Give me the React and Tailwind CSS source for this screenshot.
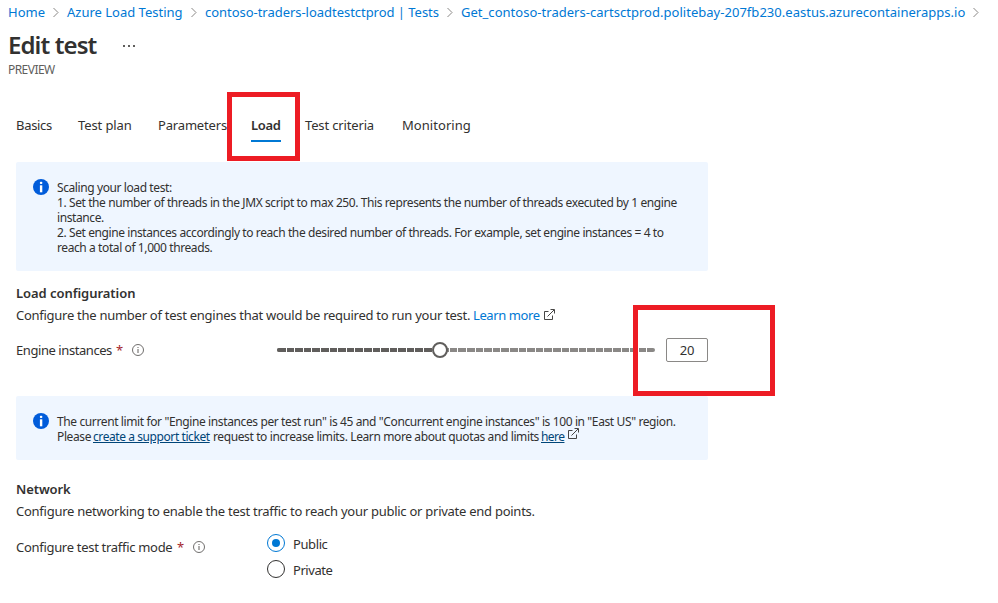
const CRUMBS = [
  { text: 'Home', cls: 'w-[37px]' },
  { text: 'Azure Load Testing', cls: 'w-[116px]' },
  { text: 'contoso-traders-loadtestctprod | Tests', cls: 'w-[234px] tracking-[-0.035px]' },
  {
    text: 'Get_contoso-traders-cartsctprod.politebay-207fb230.eastus.azurecontainerapps.io',
    cls: 'w-[504px] tracking-[0.027px]',
  },
];

const TABS = [
  { text: 'Basics', cls: 'w-[62px] tracking-[-0.3px]' },
  { text: 'Test plan', cls: 'w-[80px] tracking-[-0.1px]' },
  { text: 'Parameters', cls: 'w-[93px] tracking-[-0.17px]' },
  { text: 'Load', cls: 'w-[54px]', active: true },
  { text: 'Test criteria', cls: 'w-[97px] tracking-[-0.15px]' },
  { text: 'Monitoring', cls: 'w-[80px] tracking-[0.05px]' },
];

const STEPS = 44;
const VALUE = 19;

function Chevron() {
  return (
    <svg className="h-[13px] w-[22px] shrink-0" viewBox="0 0 22 13" fill="none" stroke="#8a8886" strokeWidth="1">
      <path d="M8.5 2 L13 6.5 L8.5 11" />
    </svg>
  );
}

function InfoBadge() {
  return (
    <svg className="size-4 shrink-0" viewBox="0 0 16 16">
      <circle cx="8" cy="8" r="8" fill="#015cda" />
      <rect x="6.9" y="2.8" width="2.4" height="2.2" rx="0.8" fill="#fff" />
      <rect x="6.9" y="6.3" width="2.4" height="7" fill="#fff" />
    </svg>
  );
}

function InfoOutline() {
  return (
    <svg className="size-3 shrink-0" viewBox="0 0 12 12">
      <circle cx="6" cy="6" r="5.5" fill="none" stroke="#605e5c" strokeWidth="0.9" />
      <rect x="5.5" y="3" width="1" height="1" fill="#605e5c" />
      <rect x="5.5" y="5" width="1" height="4" fill="#605e5c" />
    </svg>
  );
}

function ExternalIcon({ className }) {
  return (
    <svg className={className} viewBox="0 0 12 12" fill="none" stroke="#323130" strokeWidth="0.9">
      <path d="M5.5 2.5 H1.5 V10.5 H9.5 V6.5" />
      <path d="M4.5 7.5 L11 1" />
      <path d="M7.5 0.5 H11.5 V4.5" />
    </svg>
  );
}

function Slider() {
  const percent = (VALUE / STEPS) * 100;
  return (
    <div className="relative h-4 w-[378px]">
      <div className="absolute inset-x-0 top-1.5 h-1 overflow-hidden rounded-sm bg-[#8a8886]">
        <div className="h-full bg-[#605e5c]" style={{ width: `${percent}%` }} />
        {Array.from({ length: STEPS - 1 }, (_, i) => (
          <span
            key={i}
            className="absolute top-0 h-1 w-px bg-white"
            style={{ left: Math.round(((i + 1) * 378) / STEPS) }}
          />
        ))}
      </div>
      <div
        className="absolute top-0 -ml-2 size-4 rounded-full border-2 border-[#605e5c] bg-white"
        style={{ left: Math.round((378 * percent) / 100) }}
      />
    </div>
  );
}

export default function App() {
  return (
    <div className="relative h-[603px] w-[998px] overflow-hidden bg-white font-['Noto_Sans',sans-serif] text-[13px] leading-[18px] whitespace-nowrap text-[#323130]">
      <nav className="flex h-[26px] items-start pt-[3px] pl-2 text-[#0078d4]">
        {CRUMBS.map((crumb) => (
          <div key={crumb.text} className="flex items-center">
            <a className={crumb.cls}>{crumb.text}</a>
            <Chevron />
          </div>
        ))}
      </nav>

      <header className="h-[76px] pl-2">
        <div className="flex h-[36px] items-center pt-1">
          <h1 className="-mt-0.5 w-[115px] text-[24px] leading-8 font-semibold tracking-[-0.9px]">Edit test</h1>
          <div className="flex gap-[3px]">
            <span className="size-0.5 bg-[#605e5c]" />
            <span className="size-0.5 bg-[#605e5c]" />
            <span className="size-0.5 bg-[#605e5c]" />
          </div>
        </div>
        <div className="text-[12px] leading-4 tracking-[-0.55px] text-[#605e5c]">PREVIEW</div>
      </header>

      <div className="flex h-[60px] pt-[14px] pl-4">
        {TABS.map((tab) => (
          <div key={tab.text} className={tab.cls}>
            <span
              className={
                tab.active
                  ? 'inline-block h-[26px] w-[30px] border-b-2 border-[#0078d4] font-semibold tracking-[-0.3px]'
                  : 'inline-block'
              }
            >
              {tab.text}
            </span>
          </div>
        ))}
      </div>

      <main className="ml-4 w-[692px]">
        <section className="flex h-[109px] gap-2 rounded-xs bg-[#eff6ff] pt-[17px] pl-[17px] text-[12px] leading-[15px] tracking-[-0.405px]">
          <InfoBadge />
          <div className="pt-px">
            <p>Scaling your load test:</p>
            <p>1. Set the number of threads in the JMX script to max 250. This represents the number of threads executed by 1 engine</p>
            <p>instance.</p>
            <p>2. Set engine instances accordingly to reach the desired number of threads. For example, set engine instances = 4 to</p>
            <p>reach a total of 1,000 threads.</p>
          </div>
        </section>

        <section className="h-[125px] pt-[13px]">
          <h2 className="font-semibold tracking-[-0.05px]">Load configuration</h2>
          <p className="mt-1 flex items-center">
            <span className="w-[457px] tracking-[-0.27px]">
              Configure the number of test engines that would be required to run your test.
            </span>
            <a className="w-[70px] tracking-[-0.4px] text-[#0078d4]">Learn more</a>
            <ExternalIcon className="size-3" />
          </p>
          <div className="mt-3.5 flex h-6 items-center">
            <span className="w-[100px] tracking-[-0.43px]">Engine instances</span>
            <span className="w-[16px] text-[#a4262c]">*</span>
            <InfoOutline />
            <div className="ml-[133px]">
              <Slider />
            </div>
            <div className="ml-[11px] h-6 w-[42px] rounded-xs border border-[#8a8886] text-center leading-[22px] tracking-[-0.2px]">
              20
            </div>
          </div>
        </section>

        <section className="flex h-[64px] gap-2 rounded-xs bg-[#eff6ff] pt-[17px] pl-[17px] text-[12px] leading-[15px] tracking-[-0.385px]">
          <InfoBadge />
          <div className="pt-px">
            <p>The current limit for "Engine instances per test run" is 45 and "Concurrent engine instances" is 100 in "East US" region.</p>
            <p className="flex">
              <span className="w-[36px]">Please</span>
              <a className="w-[120px] text-[#004578]">
                <span className="tracking-[-0.42px] underline">create a support ticket</span>
              </a>
              <span className="w-[328px]">request to increase limits. Learn more about quotas and limits</span>
              <a className="w-[26px] text-[#004578]">
                <span className="tracking-[-0.55px] underline">here</span>
              </a>
              <ExternalIcon className="-mt-px size-3" />
            </p>
          </div>
        </section>

        <section className="pt-5">
          <h2 className="font-semibold tracking-[-0.1px]">Network</h2>
          <p className="mt-1 tracking-[-0.26px]">
            Configure networking to enable the test traffic to reach your public or private end points.
          </p>
          <div className="mt-3.5 flex">
            <div className="flex h-[26px] w-[251px] items-center">
              <span className="w-[161px] tracking-[-0.3px]">Configure test traffic mode</span>
              <span className="w-[16px] text-[#a4262c]">*</span>
              <InfoOutline />
            </div>
            <div className="flex flex-col gap-2">
              <label className="flex h-[18px] items-center gap-2">
                <span className="flex size-[18px] items-center justify-center rounded-full border border-[#0078d4]">
                  <span className="size-2 rounded-full bg-[#0078d4]" />
                </span>
                <span className="pt-0.5 tracking-[-0.4px]">Public</span>
              </label>
              <label className="flex h-[18px] items-center gap-2">
                <span className="size-[18px] rounded-full border border-[#323130]" />
                <span className="pt-0.5 tracking-[-0.45px]">Private</span>
              </label>
            </div>
          </div>
        </section>
      </main>

      <div className="absolute top-[92px] left-[227px] h-[69px] w-[73px] border-5 border-[#ed1c24]" />
      <div className="absolute top-[305px] left-[633px] h-[91px] w-[142px] border-5 border-[#ed1c24]" />
    </div>
  );
}
